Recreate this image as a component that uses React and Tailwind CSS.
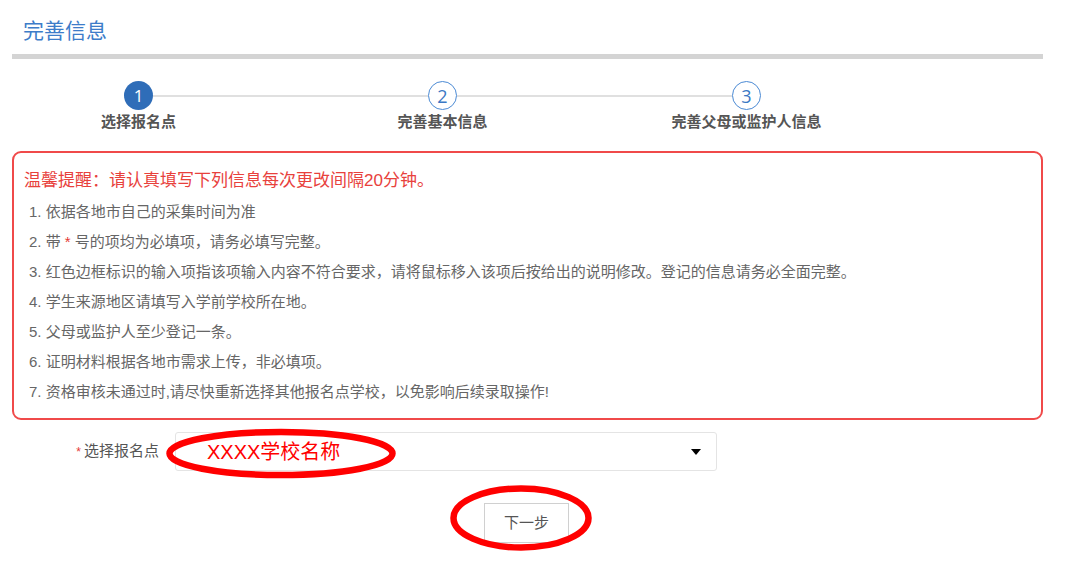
export default function App() {
  const items = [
    <>1. 依据各地市自己的采集时间为准</>,
    <>2. 带 <span className="text-[#e53935]">*</span> 号的项均为必填项，请务必填写完整。</>,
    <>3. 红色边框标识的输入项指该项输入内容不符合要求，请将鼠标移入该项后按给出的说明修改。登记的信息请务必全面完整。</>,
    <>4. 学生来源地区请填写入学前学校所在地。</>,
    <>5. 父母或监护人至少登记一条。</>,
    <>6. 证明材料根据各地市需求上传，非必填项。</>,
    <>7. 资格审核未通过时,请尽快重新选择其他报名点学校，以免影响后续录取操作!</>,
  ];
  const steps = ["选择报名点", "完善基本信息", "完善父母或监护人信息"];
  return (
    <div className="relative w-[1080px] h-[561px] overflow-hidden bg-white font-['Liberation_Sans','Noto_Sans_CJK_SC',sans-serif]">
      <div className="pl-[23px] pt-[18px] h-[54px] text-[21px] leading-[26px] text-[#3d7cc9]">完善信息</div>
      <div className="ml-[12px] w-[1031px] h-[5px] bg-[#d4d4d4]" />

      <div className="mt-[22px] flex items-start pl-[124px]">
        {steps.map((s, i) => (
          <div key={s} className="flex items-start">
            {i > 0 && <div className="mt-[14px] h-[2px] w-[275px] bg-[#e0e0e0]" />}
            <div className="flex w-[29px] flex-col items-center">
              {i === 0 ? (
                <div className="flex h-[29px] w-[29px] items-center justify-center rounded-full bg-[#2f6db8] text-[17px] leading-none text-white font-['Open_Sans',sans-serif]">1</div>
              ) : (
                <div className="flex h-[29px] w-[29px] items-center justify-center rounded-full border-[1.5px] border-[#4b8ad4] bg-white text-[18px] leading-none text-[#3b78c4] font-['Open_Sans',sans-serif]">{i + 1}</div>
              )}
              <div className="mt-[3px] whitespace-nowrap text-[15px] leading-[18px] font-bold text-[#555]">{s}</div>
            </div>
          </div>
        ))}
      </div>

      <div className="mt-[20px] ml-[12px] w-[1031px] h-[269px] rounded-[9px] border-2 border-[#f04a4a] pl-[10px] pt-[16px]">
        <div className="text-[17px] leading-[24px] text-[#e8413c]">温馨提醒：请认真填写下列信息每次更改间隔20分钟。</div>
        <div className="mt-[4px] ml-[5px]">
          {items.map((t, i) => (
            <div key={i} className="text-[15px] leading-[30px] text-[#666] whitespace-nowrap">{t}</div>
          ))}
        </div>
      </div>

      <div className="mt-[12px] flex items-center">
        <div className="w-[159px] text-right text-[15px] leading-[20px] text-[#555] whitespace-nowrap">
          <span className="mr-[3px] text-[12px] text-[#e53935]">*</span>选择报名点
        </div>
        <div className="ml-[16px] flex h-[39px] w-[542px] items-center justify-between rounded-[3px] border border-[#e4e4e4] pl-[31px] pr-[15px]">
          <span className="text-[20px] leading-none text-[#ff0000]">XXXX学校名称</span>
          <span className="h-0 w-0 border-l-[5px] border-r-[5px] border-t-[6px] border-l-transparent border-r-transparent border-t-black" />
        </div>
      </div>

      <div className="mt-[32px] ml-[484px] flex h-[40px] w-[85px] items-center justify-center border border-[#d0d0d0] text-[15px] text-[#555]">下一步</div>

      <svg className="pointer-events-none absolute left-0 top-0" width="1080" height="561">
        <ellipse cx="281" cy="453.5" rx="111.5" ry="21.5" fill="none" stroke="#ff0000" strokeWidth="6.5" />
        <ellipse cx="521" cy="518" rx="67.5" ry="29.5" fill="none" stroke="#ff0000" strokeWidth="6.5" />
      </svg>
    </div>
  );
}
